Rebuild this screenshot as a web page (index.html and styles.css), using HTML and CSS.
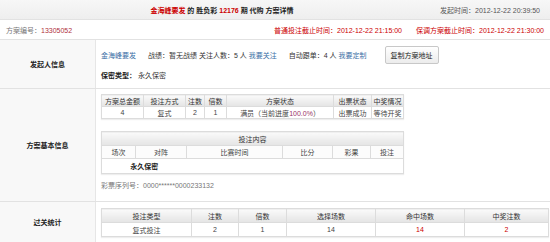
FILE: index.html
```html
<!DOCTYPE html>
<html lang="zh-CN">
<head>
<meta charset="utf-8">
<link rel="stylesheet" href="styles.css">
</head>
<body>
<div class="page">
  <div class="title-row">
    <div class="title"><span class="red">金海峰要发</span> 的 胜负彩 <span class="red">12176</span> 期 代购 方案详情</div>
    <div class="start-time">发起时间：2012-12-22 20:39:50</div>
  </div>
  <div class="info-row">
    <div class="scheme-no">方案编号：<span class="num">13305052</span></div>
    <div class="deadlines">
      <span>普通投注截止时间：2012-12-22 21:15:00</span>
      <span>保调方案截止时间：2012-12-22 21:30:00</span>
    </div>
  </div>

  <div class="section sec-starter">
    <div class="label">发起人信息</div>
    <div class="content">
      <div class="starter-line">
        <a class="link">金海峰要发</a>
        <span class="item">战绩：暂无战绩 关注人数：5 人 <a class="link">我要关注</a></span>
        <span class="item">自动跟单：4 人 <a class="link">我要定制</a></span>
        <button class="copy-btn">复制方案地址</button>
      </div>
      <div class="secret-line"><b>保密类型：</b> 永久保密</div>
    </div>
  </div>

  <div class="section sec-basic">
    <div class="label">方案基本信息</div>
    <div class="content">
      <table class="grid t-basic">
        <tr class="head">
          <th class="c1">方案总金额</th><th class="c2">投注方式</th><th class="c3">注数</th><th class="c4">倍数</th><th class="c5">方案状态</th><th class="c6">出票状态</th><th class="c7">中奖情况</th>
        </tr>
        <tr>
          <td>4</td><td>复式</td><td>2</td><td>1</td><td>满员（当前进度<span class="purple">100.0%</span>）</td><td>出票成功</td><td>等待开奖</td>
        </tr>
      </table>
      <table class="grid t-content">
        <tr class="head"><th colspan="6">投注内容</th></tr>
        <tr class="sub">
          <td class="d1">场次</td><td class="d2">对阵</td><td class="d3">比赛时间</td><td class="d4">比分</td><td class="d5">彩果</td><td class="d6">投注</td>
        </tr>
        <tr class="secret"><td colspan="2"><b>永久保密</b></td><td colspan="4"></td></tr>
      </table>
      <div class="serial">彩票序列号：0000******0000233132</div>
    </div>
  </div>

  <div class="section sec-pass">
    <div class="label">过关统计</div>
    <div class="content">
      <table class="grid t-pass">
        <tr class="head">
          <th class="p1">投注类型</th><th class="p2">注数</th><th class="p3">倍数</th><th class="p4">选择场数</th><th class="p5">命中场数</th><th class="p6">中奖注数</th>
        </tr>
        <tr>
          <td>复式投注</td><td>2</td><td>1</td><td>14</td><td class="red">14</td><td class="red">2</td>
        </tr>
      </table>
    </div>
  </div>
</div>
</body>
</html>
```
FILE: styles.css
```css
html, body { margin: 0; padding: 0; background: #fff; }
body {
  font-family: "Liberation Sans", "Noto Sans CJK SC", sans-serif;
  font-size: 7px;
  color: #333;
}
.page { width: 550px; }
.red { color: #cc0000; }
.purple { color: #993366; }

.title-row {
  height: 19px;
  display: grid;
  grid-template-columns: 1fr auto;
  align-items: center;
  background: linear-gradient(#f7f7f7, #eeeeee);
  border-bottom: 1px solid #e2e2e2;
}
.title { text-align: center; font-weight: bold; color: #222; padding-left: 4px; }
.start-time { padding-right: 10px; color: #555; }

.info-row {
  height: 19px;
  display: flex;
  align-items: center;
  justify-content: space-between;
  padding: 0 6px;
  border-bottom: 1px solid #e2e2e2;
}
.scheme-no { color: #777; }
.scheme-no .num { color: #b03040; }
.deadlines { display: flex; gap: 14px; color: #cc0000; }

.section {
  display: flex;
  border-bottom: 1px solid #e2e2e2;
}
.label {
  width: 95px;
  flex: none;
  display: flex;
  align-items: center;
  justify-content: center;
  font-weight: bold;
  color: #222;
  background: #f8f8f8;
  border-right: 1px solid #e6e6e6;
}
.content { flex: 1; padding-left: 5px; }

.sec-starter { height: 48px; }
.starter-line {
  display: flex;
  align-items: center;
  height: 22px;
  margin-top: 4px;
}
.link { color: #3a6ea5; text-decoration: none; }
.starter-line .item { margin-left: 12px; }
.copy-btn {
  margin-left: 18px;
  width: 54px;
  height: 18px;
  padding: 0;
  font: inherit;
  color: #222;
  background: linear-gradient(#ffffff, #ececec);
  border: 1px solid #c8c8c8;
  border-radius: 2px;
}
.secret-line { margin-top: 4px; }
.secret-line b { color: #222; }

.sec-basic { height: 112px; }
.sec-basic .content { padding-top: 5px; }

table.grid {
  border-collapse: collapse;
  border: 1px solid #dcdcdc;
  text-align: center;
  box-shadow: 0 1px 1px #eee;
}
table.grid th, table.grid td {
  border: 1px solid #dcdcdc;
  padding: 0;
  height: 11px;
  font-weight: normal;
  color: #444;
  white-space: nowrap;
}
table.grid tr.head th {
  background: linear-gradient(#fafafa, #e4e4e4);
  color: #333;
}
.t-basic { width: 303px; }
.t-basic .c1 { width: 41px; } .t-basic .c2 { width: 41px; } .t-basic .c3 { width: 18px; }
.t-basic .c4 { width: 21px; } .t-basic .c5 { width: 106px; } .t-basic .c6 { width: 37px; }

.t-content { width: 303px; margin-top: 12px; }
.t-content tr.head th { height: 13px; }
.t-content tr.sub td { height: 12px; background: #fcfcfc; }
.t-content .d1 { width: 33px; } .t-content .d2 { width: 50px; } .t-content .d3 { width: 95px; }
.t-content .d4 { width: 49px; } .t-content .d5 { width: 37px; }
.t-content tr.secret td { height: 14px; border-left: none; border-right: none; }
.t-content tr.secret b { color: #222; }

.serial { margin-top: 6px; color: #777; }

.sec-pass { height: 40px; border-bottom: none; }
.sec-pass .content { padding-top: 6px; }
.t-pass { width: 448px; }
.t-pass th, .t-pass td { height: 13px !important; }
.t-pass .p1 { width: 89px; } .t-pass .p2 { width: 46px; } .t-pass .p3 { width: 47px; }
.t-pass .p4 { width: 88px; } .t-pass .p5 { width: 88px; }
.t-pass td.red { color: #cc0000; }
```
